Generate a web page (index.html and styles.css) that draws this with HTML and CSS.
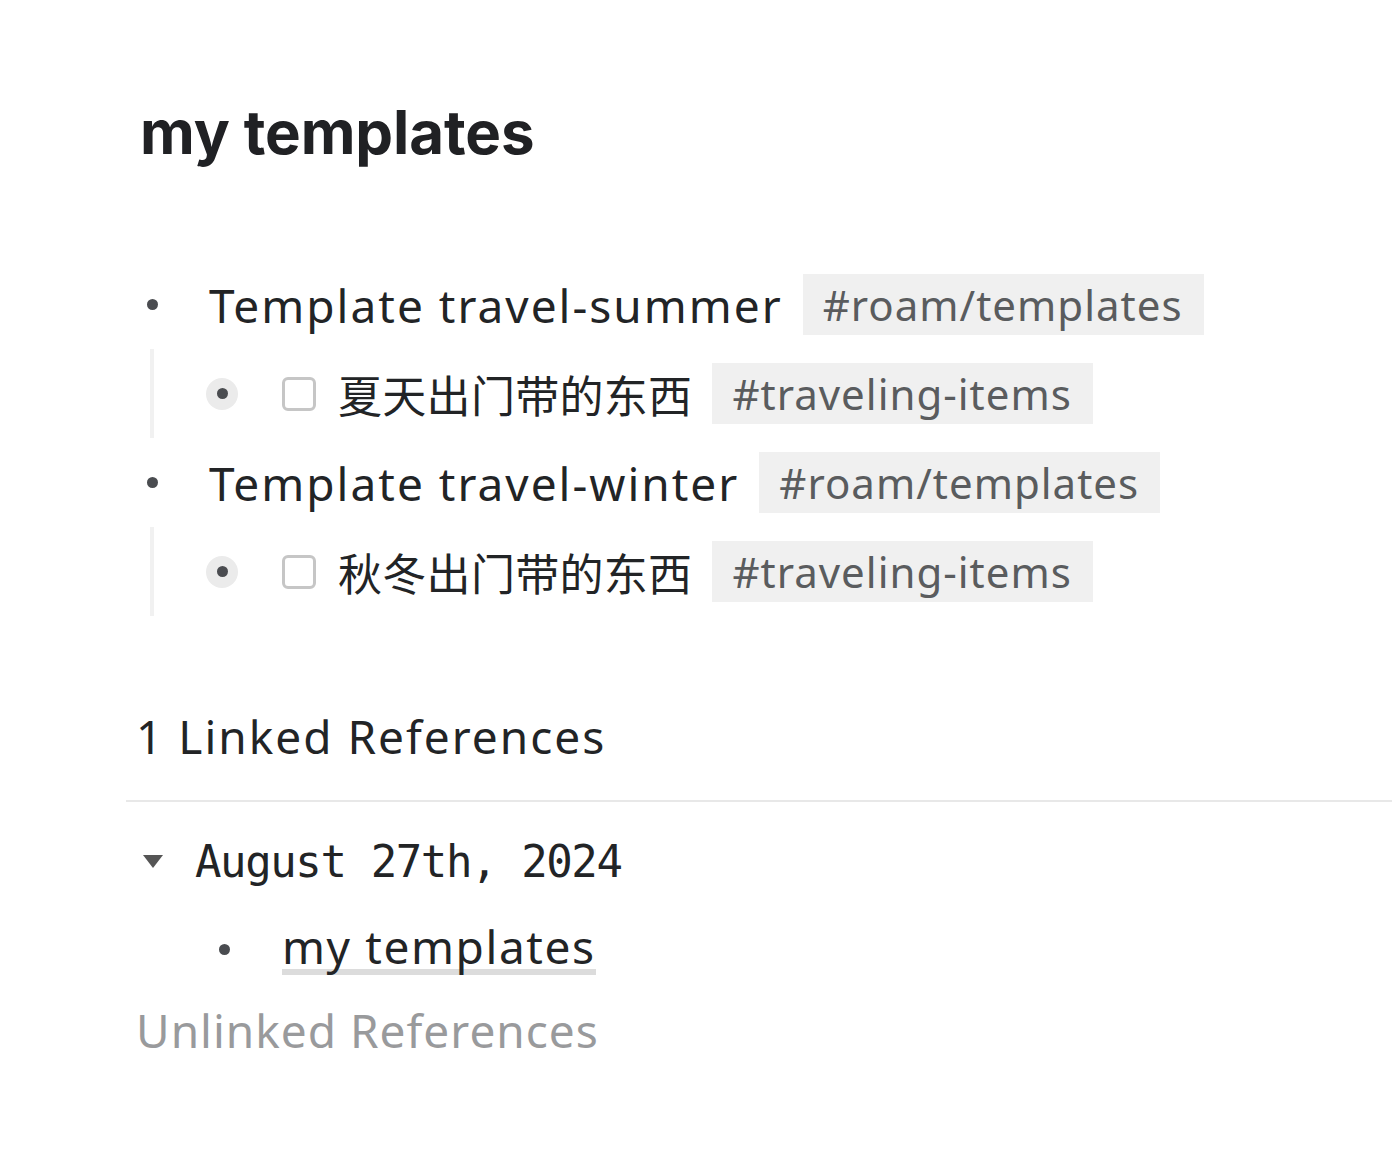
FILE: index.html
```html
<!DOCTYPE html>
<html lang="zh-CN">
<head>
<meta charset="utf-8">
<title>my templates</title>
<link rel="stylesheet" href="styles.css">
</head>
<body>
<main class="page">
  <h1 class="title">my templates</h1>

  <section class="blocks">
    <div class="block">
      <div class="row">
        <span class="bullet"><span class="dot"></span></span>
        <span class="text">Template travel-summer</span>
        <span class="tag">#roam/templates</span>
      </div>
      <div class="children">
        <div class="row child">
          <span class="bullet halo"><span class="dot"></span></span>
          <span class="checkbox"></span>
          <span class="text cjk">夏天出门带的东西</span>
          <span class="tag">#traveling-items</span>
        </div>
      </div>
    </div>
    <div class="block">
      <div class="row">
        <span class="bullet"><span class="dot"></span></span>
        <span class="text">Template travel-winter</span>
        <span class="tag">#roam/templates</span>
      </div>
      <div class="children">
        <div class="row child">
          <span class="bullet halo"><span class="dot"></span></span>
          <span class="checkbox"></span>
          <span class="text cjk">秋冬出门带的东西</span>
          <span class="tag">#traveling-items</span>
        </div>
      </div>
    </div>
  </section>

  <section class="refs">
    <h2 class="refs-title">1 Linked References</h2>
    <div class="divider"></div>
    <div class="ref-group">
      <div class="ref-head">
        <svg class="caret" width="20" height="13" viewBox="0 0 20 13"><path d="M0 0 H20 L10 13 Z" fill="#555"/></svg>
        <span class="ref-date">August 27th, 2024</span>
      </div>
      <div class="row ref-row">
        <span class="bullet"><span class="dot"></span></span>
        <span class="text link">my templates</span>
      </div>
    </div>
    <h2 class="unlinked">Unlinked References</h2>
  </section>
</main>
</body>
</html>
```

FILE: styles.css
```css
html, body {
  margin: 0;
  padding: 0;
  background: #ffffff;
}

body {
  font-family: "Noto Sans", "Noto Sans CJK SC", sans-serif;
  color: #222426;
  width: 1392px;
  overflow: hidden;
}

.page {
  padding: 96px 0 0 126px;
}

.title {
  margin: 0 0 0 14px;
  font-family: Inter, "Noto Sans", sans-serif;
  font-weight: 700;
  font-size: 60px;
  line-height: 72px;
  letter-spacing: -0.1px;
  color: #202124;
}

.blocks {
  margin-top: 92px;
}

.row {
  display: flex;
  align-items: center;
  height: 89px;
  padding-left: 10px;
}

.bullet {
  width: 32px;
  height: 32px;
  border-radius: 50%;
  display: flex;
  align-items: center;
  justify-content: center;
  flex: none;
}

.bullet.halo {
  background: #ebebeb;
}

.dot {
  width: 11px;
  height: 11px;
  border-radius: 50%;
  background: #4a4c50;
}

.text {
  margin-left: 41px;
  font-size: 46px;
  letter-spacing: 2px;
  white-space: nowrap;
  color: #222426;
}

.cjk {
  margin-left: 22px;
  font-family: "Noto Sans CJK SC", sans-serif;
  font-size: 44px;
  letter-spacing: 0.3px;
}

.tag {
  display: inline-flex;
  align-items: center;
  height: 61px;
  margin-left: 20px;
  padding: 0 21px 0 20px;
  background: #f0f0f0;
  color: #5a5c5e;
  font-size: 42px;
  letter-spacing: 1px;
  white-space: nowrap;
}

.children {
  margin-left: 24px;
  border-left: 4px solid #f1f1f1;
}

.row.child {
  padding-left: 52px;
}

.checkbox {
  width: 28px;
  height: 28px;
  margin-left: 44px;
  border: 3px solid #c6c6c6;
  border-radius: 6px;
  flex: none;
}

.refs {
  margin-top: 90px;
}

.refs-title {
  margin: 0 0 0 10px;
  font-weight: 400;
  font-size: 46px;
  line-height: 60px;
  letter-spacing: 2px;
  color: #222426;
}

.divider {
  height: 2px;
  background: #e8e8e8;
  margin-top: 34px;
}

.ref-head {
  display: flex;
  align-items: center;
  height: 118px;
  padding-left: 17px;
}

.ref-head .caret {
  flex: none;
}

.ref-date {
  margin-left: 32px;
  font-family: "DejaVu Sans Mono", monospace;
  font-size: 44px;
  letter-spacing: -1.4px;
  color: #222426;
}

.ref-row {
  height: 58px;
  padding-left: 82px;
}

.ref-row .text {
  margin-left: 42px;
  letter-spacing: 1.6px;
}

.link {
  line-height: 46px;
  box-shadow: inset 0 -6px 0 #dcdcdc;
  padding-bottom: 6px;
}

.unlinked {
  margin: 22px 0 0 10px;
  font-weight: 400;
  font-size: 46px;
  line-height: 60px;
  letter-spacing: 1px;
  color: #999a9c;
}
```
